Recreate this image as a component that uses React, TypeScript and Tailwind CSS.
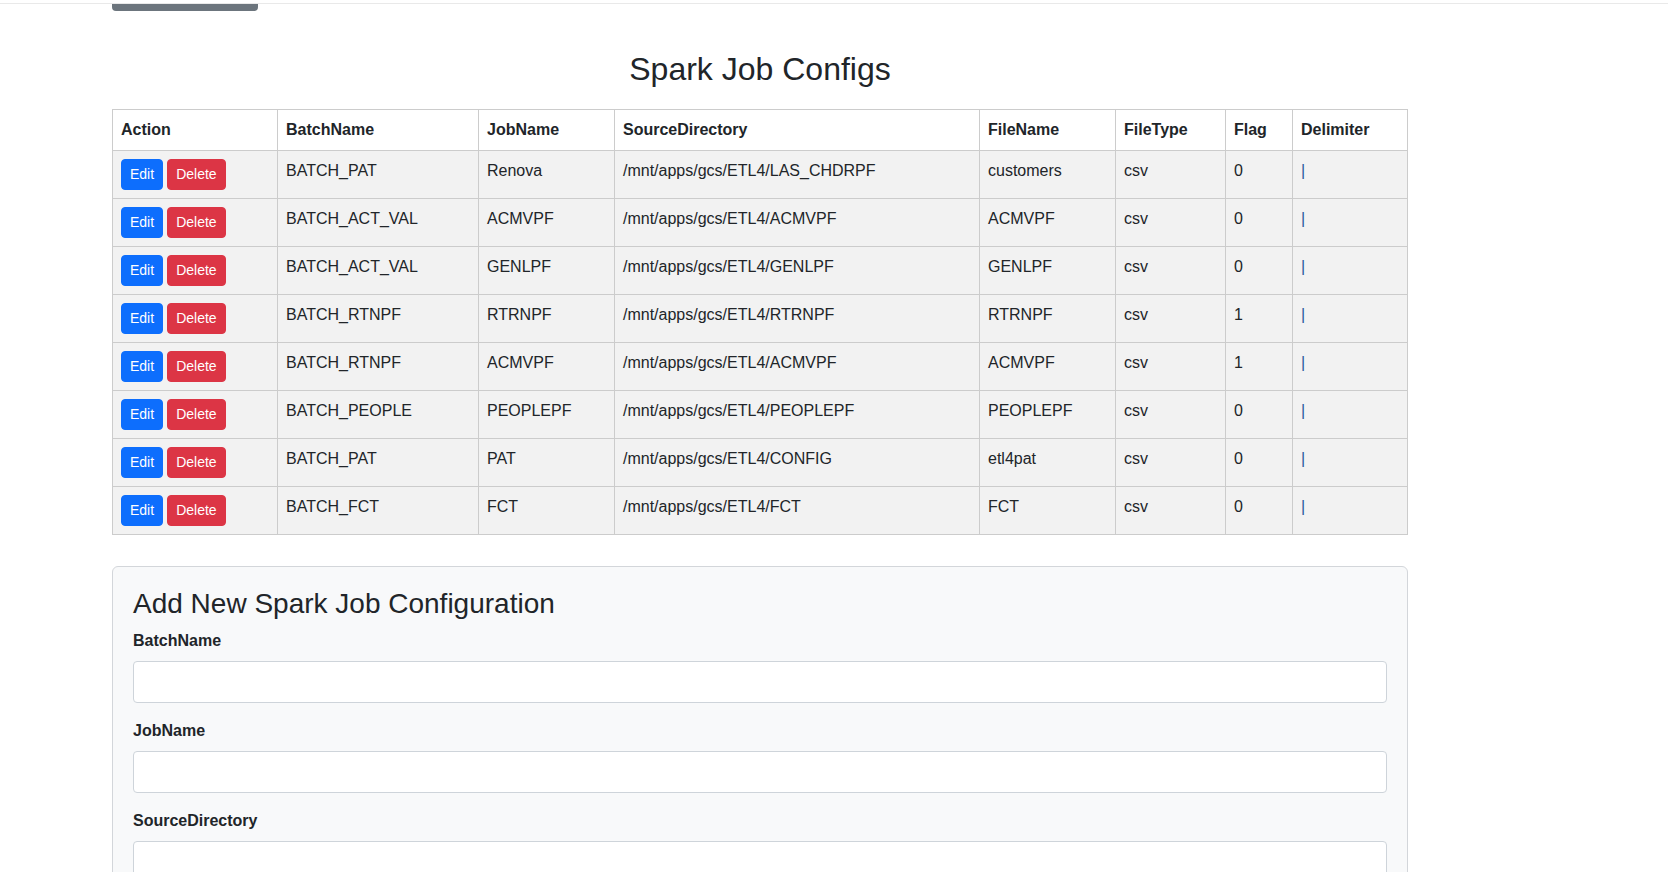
import React from "react";

interface JobConfig {
  batchName: string;
  jobName: string;
  sourceDirectory: string;
  fileName: string;
  fileType: string;
  flag: string;
  delimiter: string;
}

const configs: JobConfig[] = [
  { batchName: "BATCH_PAT", jobName: "Renova", sourceDirectory: "/mnt/apps/gcs/ETL4/LAS_CHDRPF", fileName: "customers", fileType: "csv", flag: "0", delimiter: "|" },
  { batchName: "BATCH_ACT_VAL", jobName: "ACMVPF", sourceDirectory: "/mnt/apps/gcs/ETL4/ACMVPF", fileName: "ACMVPF", fileType: "csv", flag: "0", delimiter: "|" },
  { batchName: "BATCH_ACT_VAL", jobName: "GENLPF", sourceDirectory: "/mnt/apps/gcs/ETL4/GENLPF", fileName: "GENLPF", fileType: "csv", flag: "0", delimiter: "|" },
  { batchName: "BATCH_RTNPF", jobName: "RTRNPF", sourceDirectory: "/mnt/apps/gcs/ETL4/RTRNPF", fileName: "RTRNPF", fileType: "csv", flag: "1", delimiter: "|" },
  { batchName: "BATCH_RTNPF", jobName: "ACMVPF", sourceDirectory: "/mnt/apps/gcs/ETL4/ACMVPF", fileName: "ACMVPF", fileType: "csv", flag: "1", delimiter: "|" },
  { batchName: "BATCH_PEOPLE", jobName: "PEOPLEPF", sourceDirectory: "/mnt/apps/gcs/ETL4/PEOPLEPF", fileName: "PEOPLEPF", fileType: "csv", flag: "0", delimiter: "|" },
  { batchName: "BATCH_PAT", jobName: "PAT", sourceDirectory: "/mnt/apps/gcs/ETL4/CONFIG", fileName: "etl4pat", fileType: "csv", flag: "0", delimiter: "|" },
  { batchName: "BATCH_FCT", jobName: "FCT", sourceDirectory: "/mnt/apps/gcs/ETL4/FCT", fileName: "FCT", fileType: "csv", flag: "0", delimiter: "|" },
];

const headers = ["Action", "BatchName", "JobName", "SourceDirectory", "FileName", "FileType", "Flag", "Delimiter"];
const formFields = ["BatchName", "JobName", "SourceDirectory", "FileName", "FileType", "Flag", "Delimiter"];

function Cell({ children }: { children: React.ReactNode }) {
  return <td className="border border-[#cccccc] px-2 py-2 align-top leading-6">{children}</td>;
}

export default function App() {
  return (
    <div className="min-h-screen bg-white text-[16px] text-[#212529] font-['Liberation_Sans',Arial,sans-serif]">
      <div className="h-[4px] border-b border-[#e9e9e9]" />
      <div className="pl-[112px] w-[1408px] pb-10">
        <div className="w-[146px] h-[7px] rounded-b-[4px] bg-[#6c757d]" />

        <h2 className="mt-[39px] mb-[21px] text-center text-[32px] leading-[38.4px] font-normal">Spark Job Configs</h2>

        <table className="table-fixed w-[1295px] border-collapse">
          <colgroup>
            <col className="w-[165px]" />
            <col className="w-[201px]" />
            <col className="w-[136px]" />
            <col className="w-[365px]" />
            <col className="w-[136px]" />
            <col className="w-[110px]" />
            <col className="w-[67px]" />
            <col className="w-[115px]" />
          </colgroup>
          <thead>
            <tr className="bg-white">
              {headers.map((h) => (
                <th key={h} className="border border-[#cccccc] px-2 py-2 text-left font-bold leading-6">
                  {h}
                </th>
              ))}
            </tr>
          </thead>
          <tbody>
            {configs.map((c, i) => (
              <tr key={i} className="bg-[#f2f2f2]">
                <Cell>
                  <div className="flex gap-1">
                    <button className="rounded-[4px] border border-[#0d6efd] bg-[#0d6efd] px-2 py-1 text-[14px] leading-[21px] text-white">Edit</button>
                    <button className="rounded-[4px] border border-[#dc3545] bg-[#dc3545] px-2 py-1 text-[14px] leading-[21px] text-white">Delete</button>
                  </div>
                </Cell>
                <Cell>{c.batchName}</Cell>
                <Cell>{c.jobName}</Cell>
                <Cell>{c.sourceDirectory}</Cell>
                <Cell>{c.fileName}</Cell>
                <Cell>{c.fileType}</Cell>
                <Cell>{c.flag}</Cell>
                <Cell>
                  <span className="text-[#2a5a9a]">{c.delimiter}</span>
                </Cell>
              </tr>
            ))}
          </tbody>
        </table>

        <div className="mt-[31px] w-[1296px] rounded-[6px] border border-[#d3d6da] bg-[#f8f9fa] p-5">
          <h3 className="mb-2 text-[28px] leading-[33.6px] font-normal">Add New Spark Job Configuration</h3>
          {formFields.map((f) => (
            <div key={f} className="mb-4">
              <label className="mb-2 block font-bold leading-6">{f}</label>
              <input className="block h-[42px] w-full rounded-[4px] border border-[#ced4da] bg-white px-3" />
            </div>
          ))}
          <button className="rounded-[4px] bg-[#0d6efd] px-3 py-[6px] text-white leading-6">Add Config</button>
        </div>
      </div>
    </div>
  );
}
